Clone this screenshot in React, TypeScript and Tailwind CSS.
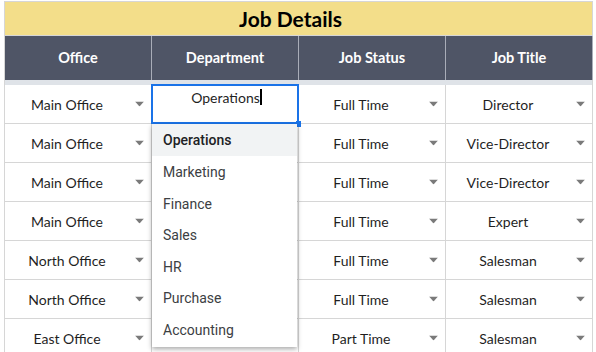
import React from "react";

const ROWS = [
  { office: "Main Office", status: "Full Time", title: "Director" },
  { office: "Main Office", status: "Full Time", title: "Vice-Director" },
  { office: "Main Office", status: "Full Time", title: "Vice-Director" },
  { office: "Main Office", status: "Full Time", title: "Expert" },
  { office: "North Office", status: "Full Time", title: "Salesman" },
  { office: "North Office", status: "Full Time", title: "Salesman" },
  { office: "East Office", status: "Part Time", title: "Salesman" },
];

const DEPARTMENTS = ["Operations", "Marketing", "Finance", "Sales", "HR", "Purchase", "Accounting"];

const HEADERS = ["Office", "Department", "Job Status", "Job Title"];

function Caret() {
  return (
    <svg width="9" height="5" viewBox="0 0 9 5" className="absolute right-[7px] top-1/2 -translate-y-1/2">
      <path d="M0 0h9L4.5 5z" fill="#7a7a7a" />
    </svg>
  );
}

function Cell({ value }: { value: string }) {
  return (
    <div className="relative flex h-[39px] items-center justify-center border-r border-b border-[#d6d6d6] pr-[22px] text-[14px] text-[#1f1f1f]">
      {value}
      <Caret />
    </div>
  );
}

function Editor() {
  return (
    <div className="relative h-[39px] border-r border-b border-[#d6d6d6]">
      <div className="absolute -top-px -right-px -bottom-px -left-px z-10 border-2 border-[#1a73e8]">
        <div className="flex justify-center pt-[1px] pl-[3px] text-[14px] text-[#1f1f1f]">
          <span>Operations</span>
          <span className="mt-[2px] h-[16px] w-[2px] bg-black" />
        </div>
      </div>
      <div className="absolute right-[-3px] bottom-[-4px] z-20 h-[6px] w-[5px] bg-[#1a73e8]" />
      <div
        className="absolute top-[39px] left-0 z-30 w-[145px] bg-white pb-[2px] shadow-[0_2px_5px_rgba(0,0,0,0.35)]"
        style={{ fontFamily: "Roboto, sans-serif" }}
      >
        {DEPARTMENTS.map((d, i) => (
          <div
            key={d}
            className={
              i === 0
                ? "flex h-[32px] items-center bg-[#f1f3f4] pt-[1px] pl-[11px] text-[14px] font-medium text-[#202124]"
                : "flex h-[31.5px] items-center pt-[2px] pl-[11px] text-[14px] text-[#3c4043]"
            }
          >
            {d}
          </div>
        ))}
      </div>
    </div>
  );
}

export default function App() {
  return (
    <div className="h-[352px] w-[596px] overflow-hidden bg-white pt-px pl-1" style={{ fontFamily: "Lato, sans-serif" }}>
      <div className="w-[589px] border-t border-l border-[#d6d6d6]">
        <div className="flex h-[34px] items-center justify-center border-r border-b border-[#d6d6d6] bg-[#f3de8a] pr-[16px] text-[21px] font-bold text-black">
          Job Details
        </div>
        <div className="grid grid-cols-[147px_147px_147px_147px] bg-[#4f5566]">
          {HEADERS.map((h) => (
            <div
              key={h}
              className="flex h-[44px] items-center justify-center border-r border-[#a9adb8] text-[14.5px] font-bold text-white"
            >
              {h}
            </div>
          ))}
        </div>
        <div className="h-[5px] border-r border-[#d6d6d6] bg-[#dfe3e8]" />
        <div className="grid grid-cols-[147px_147px_147px_147px]">
          {ROWS.map((r, i) => (
            <React.Fragment key={i}>
              <Cell value={r.office} />
              {i === 0 ? <Editor /> : <div className="h-[39px] border-r border-b border-[#d6d6d6]" />}
              <Cell value={r.status} />
              <Cell value={r.title} />
            </React.Fragment>
          ))}
        </div>
      </div>
    </div>
  );
}
